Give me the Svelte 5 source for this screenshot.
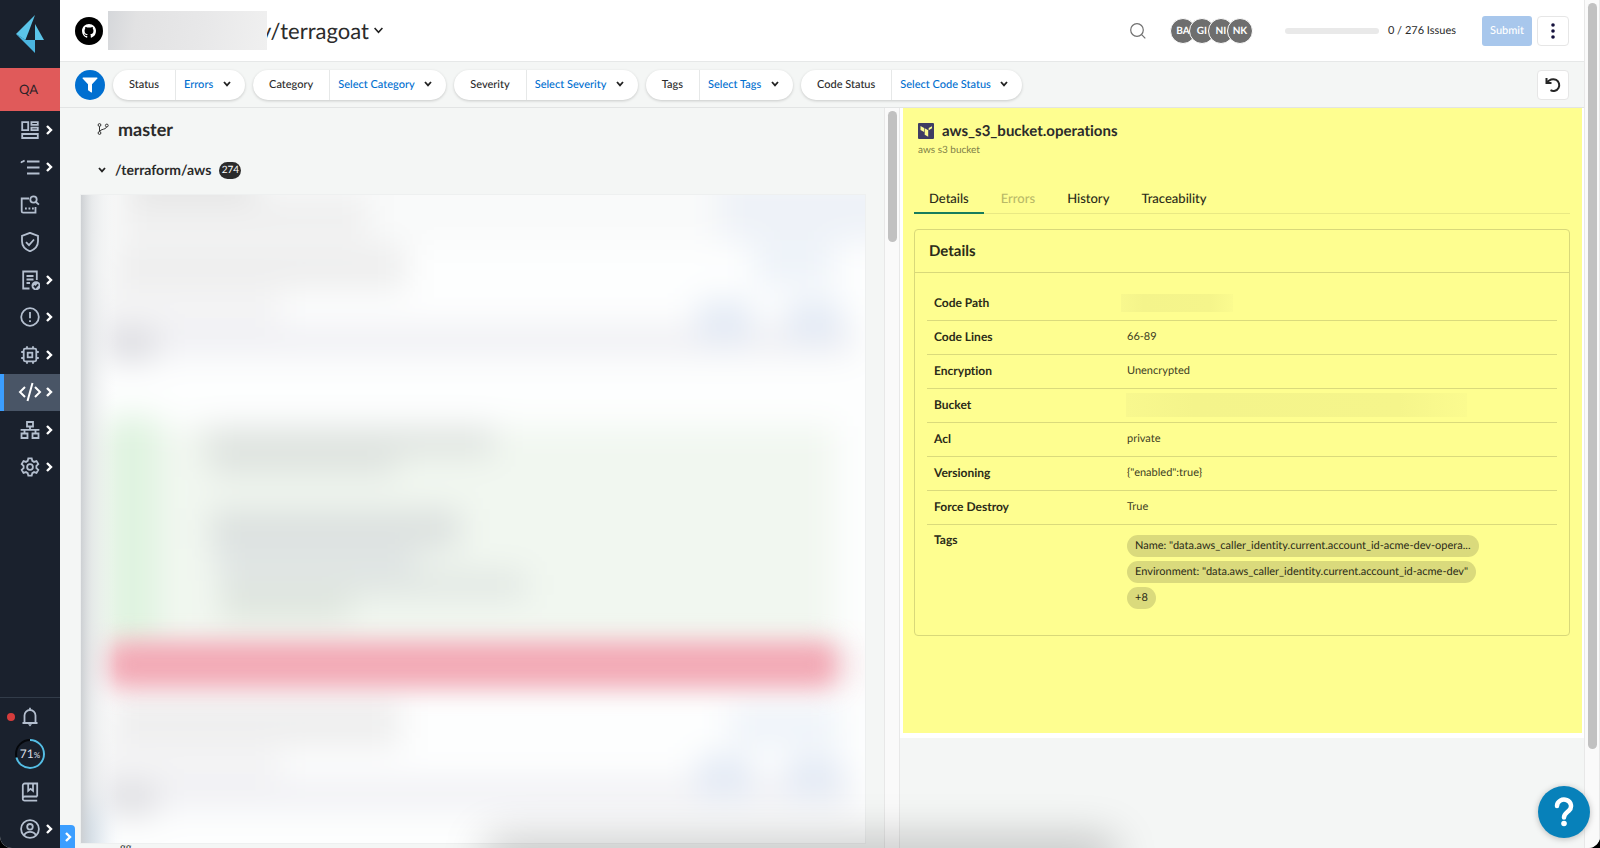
<script>
  const nav = [
    { id: 'dashboard', label: 'Dashboard', more: true },
    { id: 'inventory', label: 'Inventory', more: true },
    { id: 'investigate', label: 'Investigate' },
    { id: 'policies', label: 'Policies' },
    { id: 'compliance', label: 'Compliance', more: true },
    { id: 'alerts', label: 'Alerts', more: true },
    { id: 'compute', label: 'Compute', more: true },
    { id: 'code', label: 'Code Security', more: true, active: true },
    { id: 'network', label: 'Network Security', more: true },
    { id: 'settings', label: 'Settings', more: true },
  ];
  const filters = [
    { id: 'status', label: 'Status', value: 'Errors' },
    { id: 'category', label: 'Category', value: 'Select Category' },
    { id: 'severity', label: 'Severity', value: 'Select Severity' },
    { id: 'tags', label: 'Tags', value: 'Select Tags' },
    { id: 'code-status', label: 'Code Status', value: 'Select Code Status' },
  ];
  const people = ['BA', 'GI', 'NI', 'NK'];
  const tabs = ['Details', 'Errors', 'History', 'Traceability'];
  const details = [
    { key: 'Code Path', hidden: 'short' },
    { key: 'Code Lines', value: '66-89' },
    { key: 'Encryption', value: 'Unencrypted' },
    { key: 'Bucket', hidden: 'long' },
    { key: 'Acl', value: 'private' },
    { key: 'Versioning', value: '{"enabled":true}' },
    { key: 'Force Destroy', value: 'True' },
  ];
  const tags = [
    'Name: "data.aws_caller_identity.current.account_id-acme-dev-opera...',
    'Environment: "data.aws_caller_identity.current.account_id-acme-dev"',
    '+8',
  ];
</script>

{#snippet chevron()}
  <svg class="more" viewBox="0 0 8 12" aria-hidden="true"><path d="M2 2l4 4-4 4" /></svg>
{/snippet}

{#snippet down()}
  <svg class="down" viewBox="0 0 10 10" aria-hidden="true"><path d="M2 3l3 3.400L8 3" /></svg>
{/snippet}

{#snippet icon(id)}
  <svg class="icon" viewBox="0 0 20 20" aria-hidden="true">
    {#if id === 'dashboard'}
      <path d="M2.200 2.200h6v8h-6zM11.400 2.200h6.400v2.600h-6.400zM11.400 7.600h6.400v2.600h-6.400zM2.200 14h15.600v4H2.200z" />
    {:else if id === 'inventory'}
      <path d="M7 4.500h12.500M7 10.500h12.500M7 16.500h12.500M.8 4.800l1.400.5M2 5l2.600-1.600" />
    {:else if id === 'investigate'}
      <path d="M9 3.500H1.700v12.700a1.500 1.500 0 0 0 1.500 1.500h12.300V12" />
      <circle cx="13.500" cy="4.500" r="3.200" />
      <path d="M15.900 7l3 2.600" />
      <path d="M5 13.500h1.800M8.500 13.500h1.800M12 13.500h1.800" />
    {:else if id === 'policies'}
      <path d="M10 .8l8 3v5.500c0 5-3.300 8.200-8 10-4.700-1.800-8-5-8-10V3.800z" />
      <path d="M6 10.200l3 3 5-5.700" />
    {:else if id === 'compliance'}
      <path d="M9.500 18.500H3.200v-17h13.600v8.500M6.500 6h7M6.500 9.500h7M6.500 13h3.500" />
      <circle cx="16" cy="15.800" r="4.500" class="solid" />
      <path d="M13.900 15.700l1.600 1.700 2.700-3" class="cut" />
    {:else if id === 'alerts'}
      <circle cx="10" cy="10" r="8.800" />
      <path d="M10 5v6.300M10 13.200v1.800" />
    {:else if id === 'compute'}
      <rect x="3.700" y="3.700" width="12.600" height="12.600" rx="1.500" />
      <rect x="7.700" y="7.700" width="4.600" height="4.600" />
      <path d="M7 1.200v2.500M13 1.200v2.500M7 16.300v2.500M13 16.300v2.500M1.200 7h2.500M1.200 13h2.500M16.300 7h2.500M16.300 13h2.500" />
    {:else if id === 'network'}
      <path d="M7 2h6v4.500H7zM1.500 13.500h6V18h-6zM12.500 13.500h6V18h-6zM10 6.500v3.300M.6 9.900h18.800M4.500 9.900v3.600M15.500 9.900v3.600" />
    {:else if id === 'settings'}
      <circle cx="10" cy="10" r="2.900" />
      <path d="M8.300 1.400h3.400l.6 2.500 1.700 1 2.500-.8 1.800 3-1.900 1.800v2.200l1.900 1.800-1.800 3-2.500-.8-1.700 1-.6 2.500H8.300l-.6-2.500-1.700-1-2.500.8-1.800-3 1.900-1.800V8.900L1.700 7.100l1.800-3 2.500.8 1.700-1z" />
    {:else if id === 'bell'}
      <path d="M2.500 16h15M4.500 16V8.500a5.500 5.500 0 0 1 11 0V16M10 .8v2" />
      <path d="M8 17.200h4l-2 2.200z" class="solid" />
    {:else if id === 'book'}
      <path d="M17.200 14.500V1.500H4.800a2 2 0 0 0-2 2v13.300a1.800 1.800 0 0 0 2 1.900h12.400M2.800 16.500a2 2 0 0 1 2-2h12.400M8.200 1.500v7.300l2.400-2 2.400 2V1.500" />
    {:else if id === 'user'}
      <circle cx="10" cy="10" r="8.900" />
      <circle cx="10" cy="7.800" r="2.800" />
      <path d="M4 16.300c1.200-2.500 3.300-3.500 6-3.500s4.800 1 6 3.500" />
    {/if}
  </svg>
{/snippet}

<div class="app">
  <nav class="side" aria-label="Main">
    <a class="brand" href="#home" aria-label="Home">
      <svg viewBox="0 0 28 38" aria-hidden="true">
        <path d="M19 0L0 19l9.500 6z" fill="#5bc4e8" />
        <path d="M0 19l10 6h9v13z" fill="#4bb5e0" />
        <path d="M19 9l9 16h-9z" fill="#5bc4e8" />
        <path d="M19 7v18H9.500z" fill="#1a212d" />
      </svg>
    </a>
    <a class="env" href="#qa">QA</a>
    <ul class="items">
      {#each nav as item}
        <li>
          <a href="#{item.id}" class:active={item.active} aria-label={item.label}>
            {#if item.id === 'code'}
              <svg class="code" viewBox="0 0 24 20" aria-hidden="true"><path d="M7 5L2 10l5 5M17 5l5 5-5 5M14.500 1L9.500 19" /></svg>
            {:else}
              {@render icon(item.id)}
            {/if}
            {#if item.more}{@render chevron()}{/if}
          </a>
        </li>
      {/each}
    </ul>
    <ul class="items bottom">
      <li><a href="#bell" class="bell" aria-label="Notifications">{@render icon('bell')}<span class="dot"></span></a></li>
      <li>
        <a href="#adoption" class="ring" aria-label="Adoption 71%">
          <svg viewBox="0 0 30 30" aria-hidden="true">
            <circle cx="15" cy="15" r="14" stroke="#05070b" />
            <circle cx="15" cy="15" r="14" stroke="#55bde4" pathLength="100" stroke-dasharray="71 29" transform="rotate(-90 15 15)" />
          </svg>
          <span>71<small>%</small></span>
        </a>
      </li>
      <li><a href="#docs" aria-label="Documentation">{@render icon('book')}</a></li>
      <li><a href="#profile" aria-label="Profile">{@render icon('user')}{@render chevron()}</a></li>
    </ul>
    <button class="expand" aria-label="Expand menu">{@render chevron()}</button>
  </nav>

  <div class="page">
    <header class="top">
      <svg class="github" viewBox="0 0 28 28" aria-hidden="true">
        <circle cx="14" cy="14" r="14" fill="#000" />
        <path
          transform="translate(7 7) scale(.875)"
          fill="#fff"
          d="M8 0C3.580 0 0 3.580 0 8c0 3.540 2.290 6.530 5.470 7.590.4.070.55-.17.55-.38 0-.19-.01-.82-.01-1.490-2.010.37-2.530-.49-2.690-.94-.09-.23-.48-.94-.82-1.130-.28-.15-.68-.52-.01-.53.63-.01 1.080.58 1.230.82.72 1.210 1.870.87 2.330.66.07-.52.28-.87.51-1.070-1.780-.2-3.640-.89-3.640-3.950 0-.87.31-1.590.82-2.150-.08-.2-.36-1.020.08-2.120 0 0 .67-.21 2.200.82.64-.18 1.320-.27 2-.27s1.360.09 2 .27c1.530-1.040 2.200-.82 2.200-.82.44 1.100.16 1.920.08 2.120.51.56.82 1.270.82 2.150 0 3.070-1.870 3.750-3.650 3.950.29.25.54.73.54 1.480 0 1.070-.01 1.930-.01 2.200 0 .21.15.46.55.38A8.010 8.010 0 0 0 16 8c0-4.420-3.580-8-8-8z"
        />
      </svg>
      <h1><span class="masked" aria-hidden="true"></span><button class="repo">y/terragoat {@render down()}</button></h1>
      <button class="search" aria-label="Search">
        <svg viewBox="0 0 16 16" aria-hidden="true"><circle cx="7" cy="7" r="6.300" /><path d="M11.600 11.600l3.700 3.700" /></svg>
      </button>
      <div class="people">
        {#each people as p}<span>{p}</span>{/each}
      </div>
      <div class="meter"></div>
      <span class="count">0 / 276 Issues</span>
      <button class="submit">Submit</button>
      <button class="square" aria-label="More actions">
        <svg viewBox="0 0 16 16" aria-hidden="true" fill="#14103c"><circle cx="8" cy="2" r="1.800" /><circle cx="8" cy="8" r="1.800" /><circle cx="8" cy="14" r="1.800" /></svg>
      </button>
    </header>

    <div class="filters">
      <button class="funnel" aria-label="Filters">
        <svg viewBox="0 0 16 16" aria-hidden="true"><path d="M1 .5h14a.6.6 0 0 1 .4 1L10 7.300V15a.5.5 0 0 1-.8.4l-2.800-2a.8.8 0 0 1-.4-.7V7.300L.6 1.500a.6.6 0 0 1 .4-1z" fill="#fff" /></svg>
      </button>
      {#each filters as f}
        <div class="pill">
          <label for={f.id}>{f.label}</label>
          <div class="pick">
            <select id={f.id}><option>{f.value}</option></select>
            {@render down()}
          </div>
        </div>
      {/each}
      <button class="square reset" aria-label="Reset filters">
        <svg viewBox="0 0 16 16" aria-hidden="true" fill="none" stroke="#262626" stroke-width="2"><path d="M1.500 1v5h5M2 5.800C4 2.500 8 1.200 11.200 2.900a5.700 5.700 0 0 1-5.700 10.300" /></svg>
      </button>
    </div>

    <main>
      <section class="files">
        <div class="scroll">
          <h2>
            <svg viewBox="0 0 12 12" aria-hidden="true"><circle cx="2.500" cy="2" r="1.400" /><circle cx="2.500" cy="10" r="1.400" /><circle cx="9.800" cy="2.500" r="1.400" /><path d="M2.500 3.400v5.200M9.600 3.900C9.200 7 3.500 5.500 2.700 8.600" /></svg>
            master
          </h2>
          <button class="folder">{@render down()}<span>/terraform/aws</span><span class="badge">274</span></button>
          <svg class="veil" viewBox="0 0 786 650" preserveAspectRatio="none" aria-hidden="true">
            <defs>
              <filter id="soft" filterUnits="userSpaceOnUse" x="-60" y="-60" width="906" height="770" color-interpolation-filters="sRGB"><feGaussianBlur stdDeviation="16" /></filter>
              <filter id="edge" filterUnits="userSpaceOnUse" x="-60" y="380" width="906" height="180" color-interpolation-filters="sRGB"><feGaussianBlur stdDeviation="12" /></filter>
              <linearGradient id="shade"><stop offset="0" stop-color="#cdd0d3" /><stop offset=".3" stop-color="#dcdfe1" stop-opacity=".6" /><stop offset="1" stop-color="#f2f3f4" stop-opacity="0" /></linearGradient>
            </defs>
            <rect width="786" height="650" fill="#fdfefe" />
            <g filter="url(#soft)">
              <rect x="-60" y="-60" width="906" height="770" fill="#fdfefe" />
              <rect x="-40" y="-40" width="866" height="90" fill="#f9fafa" />
              <rect x="50" y="-20" width="125" height="34" fill="#dedede" />
              <rect x="40" y="0" width="248" height="42" fill="#efefef" />
              <rect x="30" y="50" width="296" height="46" fill="#eeeeee" />
              <rect x="10" y="94" width="190" height="44" fill="#f4f4f5" />
              <rect x="640" y="-20" width="180" height="66" fill="#eef2f8" />
              <rect x="675" y="46" width="80" height="46" fill="#eef3f9" />
              <rect x="10" y="130" width="766" height="32" fill="#f0f0f4" />
              <rect x="28" y="134" width="46" height="32" fill="#dadadf" />
              <rect x="618" y="106" width="54" height="42" fill="#e3eaf5" />
              <rect x="708" y="106" width="54" height="42" fill="#e3eaf5" />
              <rect x="0" y="232" width="756" height="226" fill="#f1f7f0" />
              <rect x="28" y="222" width="48" height="230" fill="#def3df" />
              <rect x="124" y="232" width="290" height="30" fill="#dfe4e0" />
              <rect x="130" y="254" width="186" height="28" fill="#dfe4e0" />
              <rect x="130" y="315" width="250" height="40" fill="#dce1df" />
              <rect x="136" y="350" width="200" height="36" fill="#e0e5e5" />
              <rect x="140" y="378" width="306" height="26" fill="#e0e6e2" />
              <rect x="140" y="400" width="130" height="26" fill="#dee5dd" />
              <rect x="0" y="452" width="786" height="40" fill="#f8eef0" />
              <rect x="30" y="505" width="290" height="50" fill="#eeeeee" />
              <rect x="10" y="550" width="190" height="40" fill="#f4f4f5" />
              <rect x="650" y="512" width="110" height="40" fill="#eef3f9" />
              <rect x="10" y="586" width="766" height="30" fill="#f0f0f4" />
              <rect x="28" y="590" width="46" height="32" fill="#dcdce0" />
              <rect x="618" y="562" width="54" height="42" fill="#e3eaf5" />
              <rect x="708" y="562" width="54" height="42" fill="#e3eaf5" />
              <rect x="-40" y="615" width="46" height="60" fill="#8ab4dc" />
            </g>
            <rect x="26" y="448" width="732" height="46" rx="14" fill="#f2a9b5" filter="url(#edge)" />
            <rect width="36" height="650" fill="url(#shade)" />
          </svg>
          <p class="clip">gg</p>
        </div>
        <div class="track"><div class="thumb short"></div></div>
      </section>

      <aside class="resource">
        <div class="sheet">
          <h3>
            <svg viewBox="0 0 16 16" aria-hidden="true"><rect width="16" height="16" rx="1" fill="#3f3d63" /><path d="M2.500 3l3.600 2v4L2.500 7zM6.700 5.300l3.500 2v6.500l-3.500-2zM10.700 7.300l3.300-2V3.200l-3.300 1.900z" fill="#fefe90" /></svg>
            aws_s3_bucket.operations
          </h3>
          <p class="kind">aws s3 bucket</p>
          <div class="tabs" role="tablist">
            {#each tabs as t, i}
              <button role="tab" class:on={i === 0} aria-selected={i === 0} disabled={t === 'Errors'}>{t}</button>
            {/each}
          </div>
          <div class="card">
            <h4>Details</h4>
            <div class="body">
              <table>
                <tbody>
                  {#each details as d}
                    <tr>
                      <th scope="row">{d.key}</th>
                      <td>{#if d.hidden}<span class="smudge {d.hidden}"></span>{:else}{d.value}{/if}</td>
                    </tr>
                  {/each}
                  <tr class="last">
                    <th scope="row">Tags</th>
                    <td><div class="tags">{#each tags as t}<span>{t}</span>{/each}</div></td>
                  </tr>
                </tbody>
              </table>
            </div>
          </div>
        </div>
      </aside>
    </main>
  </div>
  <div class="track outer"><div class="thumb long"></div></div>
  <div class="dusk"></div>
  <button class="help" aria-label="Help">
    <svg viewBox="0 0 20 30" aria-hidden="true"><path d="M3 9a7 6.500 0 1 1 11.800 4.800C12 16.200 10 17 10 20.500" /><circle cx="10" cy="26.500" r="2.800" /></svg>
  </button>
</div>

<style>
  :global(body) { background: #000; }
  .app, .app :global(*) { box-sizing: border-box; }
  .app {
    display: flex;
    height: 100vh;
    overflow: hidden;
    position: relative;
    border-radius: 0 0 12px 12px;
    background: #f4f6f5;
    color: #2b2b2b;
    font: 11px/16px Lato, "Open Sans", sans-serif;
    text-rendering: geometricPrecision;
    font-variant-ligatures: none;
  }
  h1, h2, h3, h4, p, ul { margin: 0; padding: 0; font-weight: 400; }
  ul { list-style: none; }
  a { color: inherit; text-decoration: none; }
  button, select { font: inherit; color: inherit; border: 0; padding: 0; background: none; cursor: pointer; text-rendering: inherit; }
  svg { display: block; flex: none; }

  .side { position: relative; display: flex; flex-direction: column; width: 60px; flex: none; background: #1a212d; color: #b4bfcf; }
  .brand { display: flex; justify-content: center; height: 68px; padding-top: 15px; }
  .brand svg { width: 28px; height: 38px; }
  .env { height: 43px; background: #e05a5a; color: #2d2228; font-size: 13px; line-height: 43px; text-align: center; padding-right: 3px; }
  .items { display: flex; flex-direction: column; height: 375px; }
  .items li { flex: 1; display: flex; }
  .items a { flex: 1; display: flex; align-items: center; gap: 5px; padding-left: 20px; position: relative; }
  .bottom { margin-top: auto; height: 151px; border-top: 1px solid #323c49; }
  .active { background: #495566; color: #fff; box-shadow: inset 4px 0 #3b9eff; }
  .items a.active { padding-left: 18px; gap: 3px; }
  .icon { width: 20px; height: 20px; fill: none; stroke: currentColor; stroke-width: 1.800; }
  .icon .solid { fill: currentColor; stroke: none; }
  .icon .cut { stroke: #1a212d; }
  .code { width: 24px; height: 20px; fill: none; stroke: #fff; stroke-width: 2; }
  .more { width: 8px; height: 12px; fill: none; stroke: #fff; stroke-width: 2.400; }
  .dot { position: absolute; left: 7px; width: 8px; height: 8px; border-radius: 50%; background: #d63c3c; }
  .items .ring { padding: 0; justify-content: center; color: #d9dfe6; font-size: 12px; }
  .ring svg { position: absolute; width: 30px; height: 30px; fill: none; stroke-width: 2; }
  .ring small { font-size: 8px; }
  .expand { position: absolute; left: 60px; bottom: 0; z-index: 2; width: 15px; height: 23px; display: grid; place-items: center; background: #3b9eff; border-radius: 0 4px 0 0; }

  .page { flex: 1; min-width: 0; display: flex; flex-direction: column; }
  .top { display: flex; align-items: center; height: 62px; padding: 0 15px; background: #fff; border-bottom: 1px solid #e6e8e8; flex: none; }
  .github { width: 28px; height: 28px; }
  h1 { display: flex; align-items: center; margin: 0 auto 0 5px; }
  .masked { position: relative; z-index: 1; width: 159px; height: 39px; margin-right: -7px; background: linear-gradient(100deg, #d5d7da, #e2e2e3 18%, #e8e8e9 60%, #f0f0f0); }
  .repo { display: flex; align-items: center; gap: 3px; font-size: 22px; line-height: 30px; }
  .down { width: 10px; height: 10px; fill: none; stroke: #222; stroke-width: 1.800; }
  .repo .down { width: 13px; height: 13px; stroke-width: 1.200; }
  .search svg { width: 16px; height: 16px; fill: none; stroke: #707070; stroke-width: 1.200; }
  .people { display: flex; margin-left: 24px; }
  .people span { width: 26px; height: 26px; margin-right: -7px; border: 1px solid #fff; border-radius: 50%; background: #6e6e6e; color: #fff; font-size: 10px; line-height: 24px; text-align: center; font-weight: 700; }
  .meter { width: 94px; height: 6px; margin-left: 39px; border-radius: 3px; background: #e9e9e9; }
  .count { margin: 1px 26px 0 9px; }
  .submit { width: 50px; height: 30px; margin-right: 5px; border-radius: 3px; background: #a8c7ec; color: #fff; font-weight: 500; }
  .square { width: 32px; height: 30px; display: grid; place-items: center; border: 1px solid #e6e6e6; border-radius: 4px; background: #fff; }
  .square svg { width: 16px; height: 16px; }

  .filters { display: flex; align-items: center; gap: 8px; height: 46px; padding: 0 15px; border-bottom: 1px solid #e2e4e4; flex: none; }
  .funnel { width: 30px; height: 30px; display: grid; place-items: center; border-radius: 50%; background: #006fd0; }
  .funnel svg { width: 16px; height: 16px; }
  .pill { display: flex; height: 30px; border-radius: 15px; background: #fff; box-shadow: 0 1px 3px #0000002e; font-weight: 500; line-height: 29px; }
  .pill label { padding: 0 16px; border-right: 1px solid #e6e8e8; }
  .pick { display: flex; align-items: center; padding: 0 13px 1px 8px; gap: 8px; color: #006fd0; }
  select { appearance: none; height: 28px; }
  .reset { margin-left: auto; }

  main { flex: 1; min-height: 0; display: grid; grid-template-columns: 840fr 684fr; }
  .files { display: flex; min-height: 0; min-width: 0; }
  .scroll { flex: 1; min-width: 0; overflow: hidden; padding: 0 18px 0 20px; }
  h2 { display: flex; align-items: center; gap: 9px; padding: 9px 0 0 17px; font-size: 18px; line-height: 24px; font-weight: 700; }
  h2 svg { width: 12px; height: 12px; fill: none; stroke: #333; }
  .folder { display: flex; align-items: center; margin: 18px 0 13px 17px; font-size: 14px; line-height: 22px; font-weight: 700; gap: 8px; }
  .badge { min-width: 22px; height: 17px; border-radius: 9px; background: #2b2b2b; color: #fff; font-size: 10px; line-height: 17px; text-align: center; font-weight: 400; }
  .veil { width: 100%; height: 650px; border: 1px solid #eef0f0; }
  .clip { padding-left: 40px; line-height: 8px; }
  .track { width: 16px; flex: none; background: #fafafa; border: solid #e8e8e8; border-width: 0 1px; padding-top: 3px; }
  .thumb { width: 9px; margin-left: 3px; border-radius: 5px; background: #c1c1c1; }
  .short { height: 131px; }
  .long { height: 746px; }

  .resource { min-width: 0; }
  .sheet { background: #fefe90; border: solid #fff; border-width: 0 2px 5px 3px; height: 630px; padding: 13px 12px 0 11px; }
  h3 { display: flex; align-items: center; gap: 8px; padding-left: 4px; font-size: 15px; line-height: 20px; font-weight: 700; }
  h3 svg { width: 16px; height: 16px; }
  .kind { padding: 1px 0 0 4px; font-size: 10px; color: #7e7e48; }
  .tabs { display: flex; gap: 2px; margin-top: 25px; border-bottom: 1px solid #e9e984; }
  .tabs button { padding: 0 15px; height: 31px; margin-bottom: -1px; border-bottom: 2px solid transparent; font-size: 13px; font-weight: 500; color: #2b2b18; }
  .tabs button:disabled { color: #b9b968; }
  .tabs .on { border-color: #177c5c; }
  .card { margin-top: 15px; height: 407px; border: 1px solid #d8d87a; border-radius: 4px; color: #2b2b18; }
  h4 { height: 43px; padding-left: 14px; border-bottom: 1px solid #d8d87a; font-size: 15px; line-height: 43px; font-weight: 700; }
  .body { padding: 13px 12px; }
  table { width: 100%; border-collapse: collapse; table-layout: fixed; }
  tr { height: 34px; border-bottom: 1px solid #dada7c; }
  .last { border: 0; }
  th { width: 193px; padding: 0 7px; text-align: left; font-size: 12px; font-weight: 700; }
  td { padding: 0 7px; color: #404024; }
  .last th { vertical-align: top; padding-top: 7px; }
  .last td { padding-top: 10px; }
  .smudge { display: block; background: linear-gradient(90deg, #f8f88e, #f4f48b 20%, #f5f58b 80%, #fbfb8f); }
  .smudge.short { width: 112px; height: 18px; margin-left: -6px; }
  .smudge.long { width: 341px; height: 24px; margin-left: -1px; }
  .tags { display: flex; flex-direction: column; align-items: flex-start; gap: 4px; }
  .tags span { height: 22px; padding: 0 8px; border-radius: 11px; background: #dada7c; line-height: 22px; white-space: nowrap; color: #2b2b18; }
  .dusk { position: absolute; left: 31%; right: 31%; bottom: -20px; height: 20px; box-shadow: 0 0 44px 10px #00000038; pointer-events: none; }
  .help { position: absolute; right: 10px; bottom: 10px; width: 52px; height: 52px; display: grid; place-items: center; border-radius: 50%; background: #0781ba; box-shadow: 0 1px 6px #00000040; }
  .help svg { width: 20px; height: 30px; fill: none; stroke: #fff; stroke-width: 4.500; stroke-linecap: round; }
  .help circle { fill: #fff; stroke: none; }
</style>
